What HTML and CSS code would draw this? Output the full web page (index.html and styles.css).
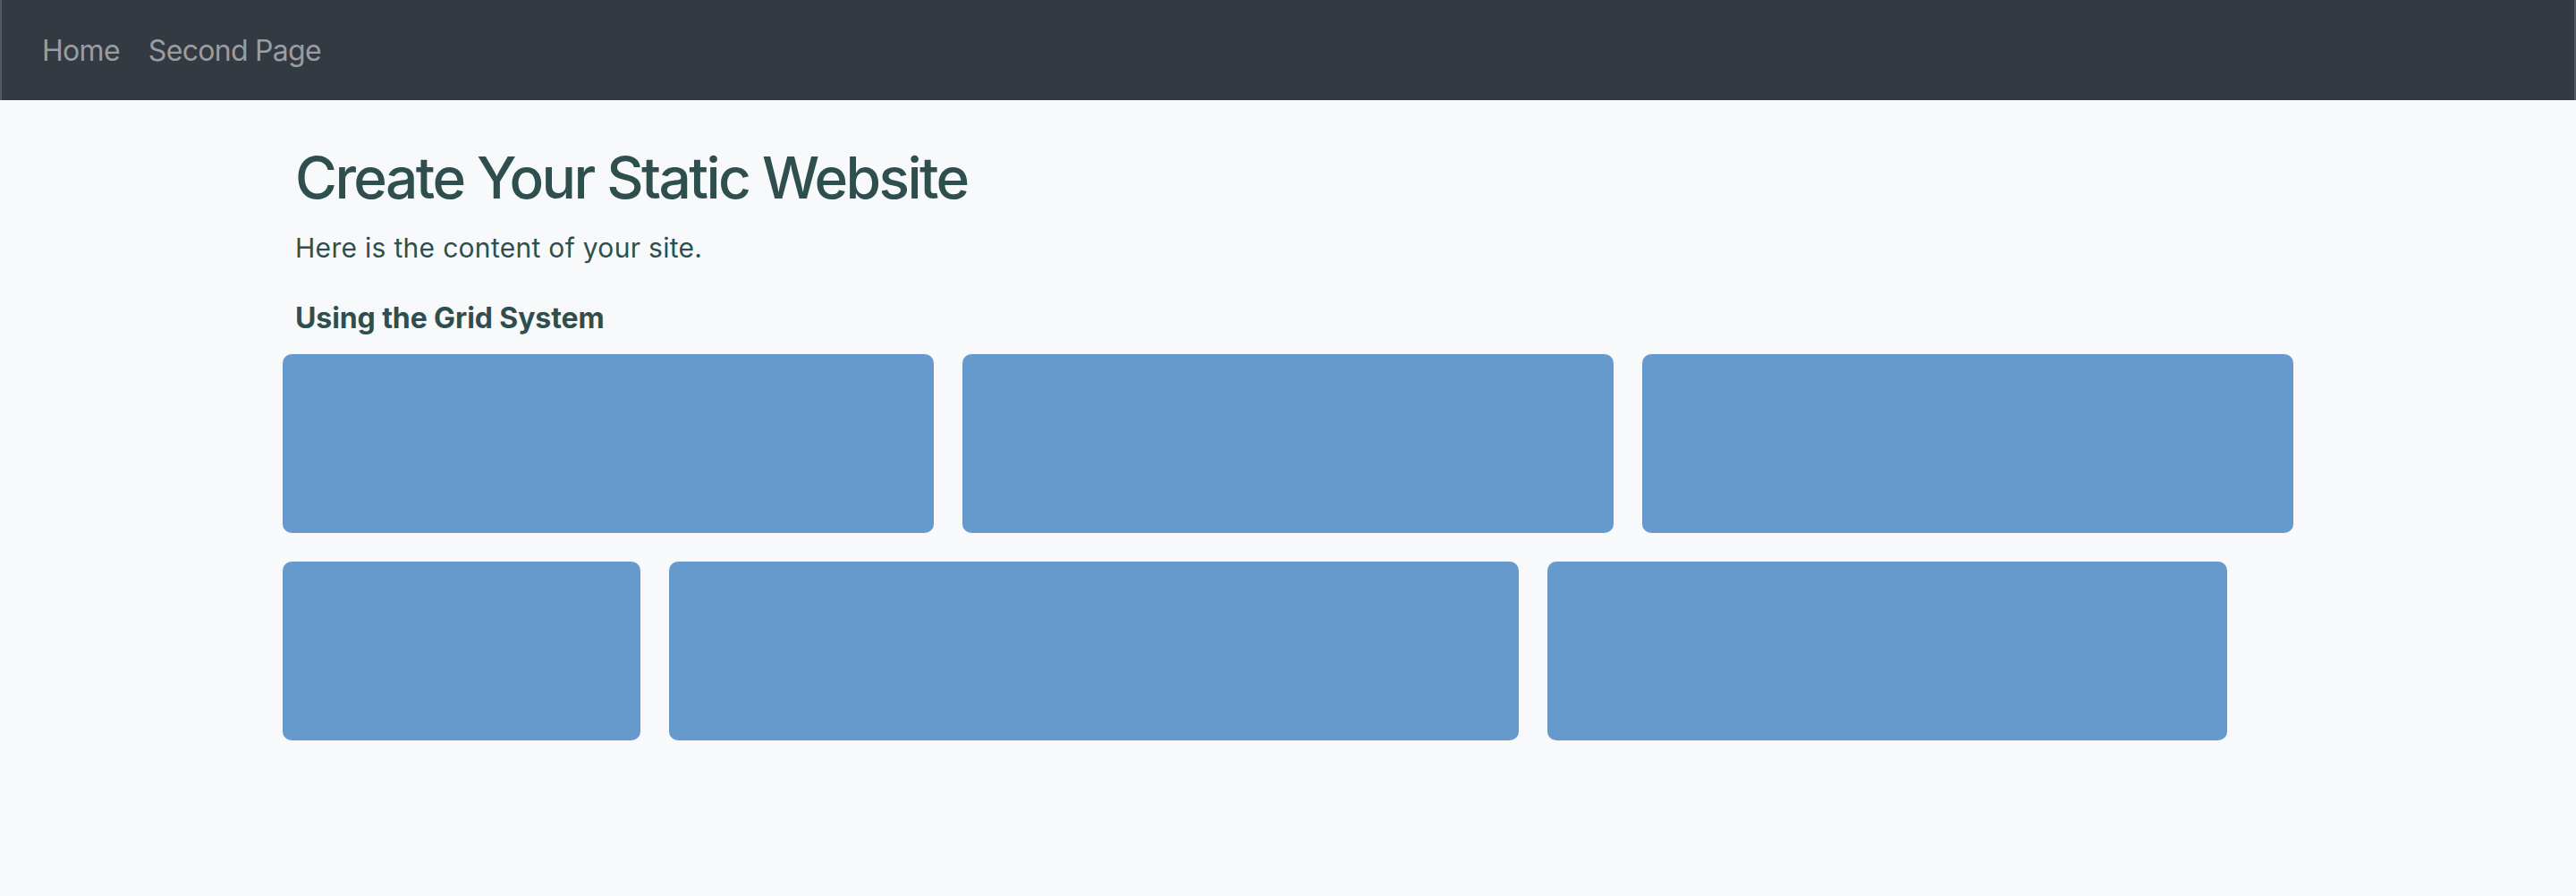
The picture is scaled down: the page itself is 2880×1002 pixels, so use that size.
FILE: index.html
```html
<!DOCTYPE html>
<html lang="en">
<head>
<meta charset="utf-8">
<title>Create Your Static Website</title>
<link rel="stylesheet" href="styles.css">
</head>
<body>
<nav class="navbar">
  <a class="nav-link" href="#">Home</a>
  <a class="nav-link" href="#">Second Page</a>
</nav>
<main class="container">
  <div class="intro">
    <h1 class="title">Create Your Static Website</h1>
    <p class="lead">Here is the content of your site.</p>
    <h5 class="subtitle">Using the Grid System</h5>
  </div>
  <div class="grid-row">
    <div class="box box-third"></div>
    <div class="box box-third"></div>
    <div class="box box-third"></div>
  </div>
  <div class="grid-row">
    <div class="box box-sm"></div>
    <div class="box box-lg"></div>
    <div class="box box-md"></div>
  </div>
</main>
</body>
</html>
```
FILE: styles.css
```css
* { box-sizing: border-box; }

html, body {
  margin: 0;
  padding: 0;
}

body {
  background: #f8f9fb;
  font-family: Inter, "Noto Sans", "Liberation Sans", sans-serif;
  color: #2f4f4f;
  min-height: 1002px;
}

.navbar {
  height: 112px;
  background: #343a41;
  display: flex;
  align-items: center;
  padding: 2px 0 0 29px;
  border-left: 2px solid #55595f;
  border-right: 2px solid #55595f;
}

.nav-link {
  color: #9a9da1;
  text-decoration: none;
  font-size: 32px;
  line-height: 1.2;
  letter-spacing: -0.7px;
  padding: 0 16px;
}

.container {
  width: 2248px;
  margin: 0 auto;
  padding-top: 49px;
}

.intro {
  padding-left: 14px;
}

.title {
  margin: 0;
  font-size: 64px;
  font-weight: 500;
  line-height: 1.2;
  letter-spacing: -2.55px;
}

.lead {
  margin: 17px 0 0;
  font-size: 30px;
  line-height: 45px;
  font-weight: 400;
  letter-spacing: 0.3px;
}

.subtitle {
  margin: 37px 0 21px;
  font-size: 32px;
  line-height: 1.2;
  font-weight: 700;
  letter-spacing: -0.1px;
}

.grid-row {
  display: flex;
  gap: 32px;
  margin-bottom: 32px;
}

.box {
  height: 200px;
  background: #6699cc;
  border-radius: 10px;
}

.box-third { flex: 1 1 0; }
.box-sm { flex: 0 0 400px; }
.box-lg { flex: 0 0 950px; }
.box-md { flex: 0 0 760px; }
```
